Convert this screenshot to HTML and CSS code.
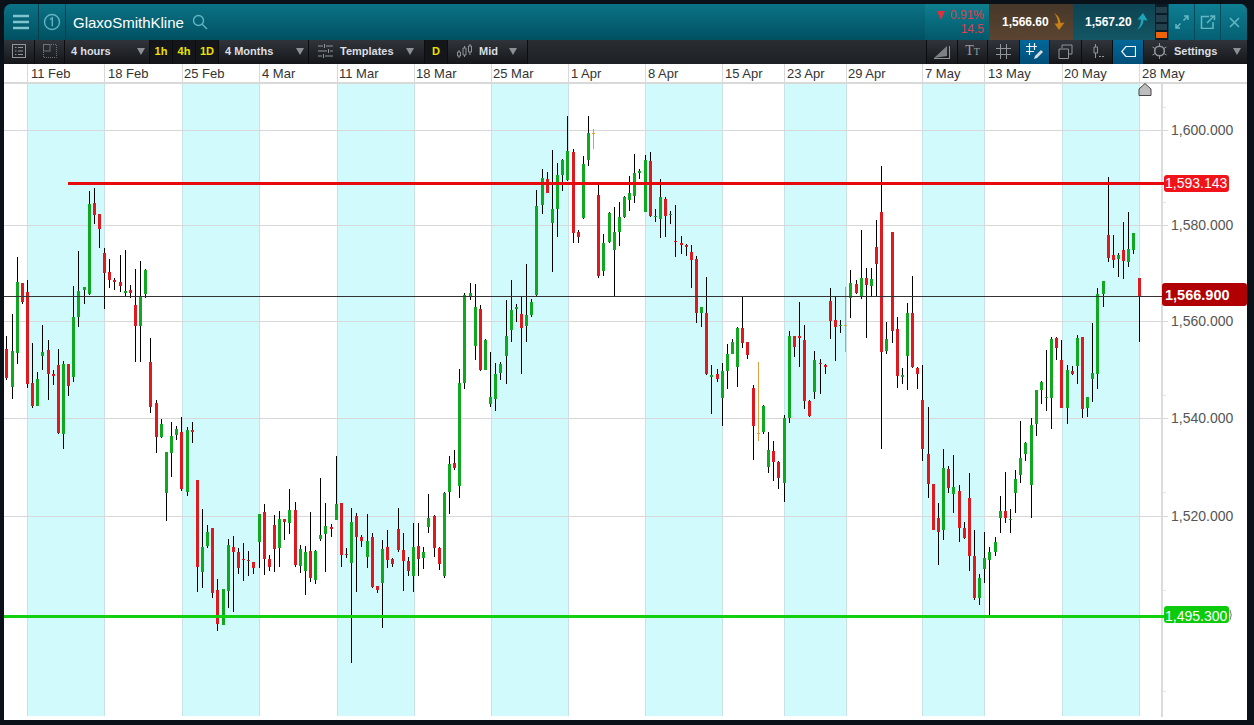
FILE: index.html
```html
<!DOCTYPE html>
<html lang="en">
<head>
<meta charset="utf-8">
<title>GlaxoSmithKline chart</title>
<link rel="stylesheet" href="styles.css">
</head>
<body>
<main class="window">
  <header class="topbar">
    <button class="top-cell menu-cell" aria-label="Menu">
      <svg width="18" height="16" viewBox="0 0 18 16"><path class="ico-top-thick" d="M1 2H17M1 8H17M1 14H17"/></svg>
    </button>
    <div class="top-cell link-cell">
      <svg width="18" height="18" viewBox="0 0 18 18"><circle class="ico-top" cx="9" cy="9" r="7.5"/><path class="ico-top" d="M7 6.5L9.3 4.8V13.2"/></svg>
    </div>
    <div class="title-cell">
      <span class="title">GlaxoSmithKline</span>
      <svg width="16" height="16" viewBox="0 0 16 16"><circle class="ico-top" cx="6.5" cy="6.5" r="5"/><path class="ico-top" d="M10.2 10.2L15 15"/></svg>
    </div>
    <div class="change">
      <div class="change-row"><span class="down-tri"></span><span>0.91%</span></div>
      <div class="change-row">14.5</div>
    </div>
    <div class="price sell">
      <span>1,566.60</span>
      <svg width="13" height="17" viewBox="0 0 13 17"><path class="arrow-sell" d="M2 0C5 2 8 4 8.500 10L12.500 9.500L7 17L2.500 10.500L6 10.500C6 6 4.500 3 2 0Z"/></svg>
    </div>
    <div class="price buy">
      <span>1,567.20</span>
      <svg width="13" height="17" viewBox="0 0 13 17"><path class="arrow-buy" d="M2 17C5 15 8 13 8.500 7L12.500 7.500L8 0L2.500 6.500L6 6.500C6 11 4.500 14 2 17Z"/></svg>
    </div>
    <div class="meter"><i></i><i></i><i></i><i class="meter-on"></i></div>
    <button class="win-btn" aria-label="Expand">
      <svg width="14" height="14" viewBox="0 0 14 14"><path class="ico-win" d="M8.500 5.500L13 1M9 1H13V5M5.500 8.500L1 13M1 9V13H5"/></svg>
    </button>
    <button class="win-btn" aria-label="Detach">
      <svg width="16" height="14" viewBox="0 0 16 14"><path class="ico-win" d="M9 1.500H1.500V13.500H13V7M7 8L14 1M10 1H14.500V5"/></svg>
    </button>
    <button class="win-btn win-last" aria-label="Close">
      <svg width="11" height="11" viewBox="0 0 11 11"><path class="ico-win" d="M1 1L10 10M10 1L1 10"/></svg>
    </button>
  </header>

  <nav class="toolbar">
    <div class="tool w31">
      <svg width="14" height="14" viewBox="0 0 14 14"><rect class="ico" x="0.5" y="0.5" width="13" height="13"/><path class="ico" d="M3 3.500H4.500M6 3.500H11M3 7H4.500M6 7H11M3 10.500H4.500M6 10.500H11"/></svg>
    </div>
    <div class="tool w30">
      <svg width="14" height="14" viewBox="0 0 14 14"><rect class="ico-dim" x="0.5" y="0.5" width="6.5" height="6.5"/><path class="ico-dots" d="M8 0.500H13.500V13.500H0.500V8"/></svg>
    </div>
    <div class="tool drop w85"><span>4 hours</span><i class="caret caret-near"></i></div>
    <div class="tool key w23">1h</div>
    <div class="tool key w23">4h</div>
    <div class="tool key w23">1D</div>
    <div class="tool drop w90"><span>4 Months</span><i class="caret caret-near"></i></div>
    <div class="tool drop drop-icon w116">
      <svg width="15" height="14" viewBox="0 0 15 14"><path class="ico" d="M0 2H5M8 2H15M6.500 0V4M0 7H9M12 7H15M10.500 5V9M0 12H4M7 12H15M5.500 10V14"/></svg>
      <span>Templates</span><i class="caret"></i>
    </div>
    <div class="tool key w23">D</div>
    <div class="tool drop drop-icon w80">
      <svg width="15" height="14" viewBox="0 0 15 14"><path class="ico" d="M2 6V8M0.500 8H3.500V12H0.500ZM2 12V14M7.500 2V4M6 4H9V11H6ZM7.500 11V13M13 0V2M11.500 2H14.500V8H11.500ZM13 8V11"/></svg>
      <span>Mid</span><i class="caret"></i>
    </div>
    <div class="toolbar-gap"></div>
    <div class="tool w31">
      <svg width="18" height="15" viewBox="0 0 18 15"><path class="ruler" d="M1 14L14 2V12Z"/><path class="ico" d="M1 14.500H17M16.500 2V14.500"/></svg>
    </div>
    <div class="tool w30 tt"><span class="t-big">T</span><span class="t-small">T</span></div>
    <div class="tool w32">
      <svg width="15" height="15" viewBox="0 0 15 15"><path class="ico" d="M4.500 0V15M10.500 0V15M0 4.500H15M0 10.500H15"/></svg>
    </div>
    <div class="tool w30 active">
      <svg width="18" height="16" viewBox="0 0 18 16"><path class="ico-white" d="M3.500 0V12M8.500 0V7M0 3.500H11M0 8.500H8"/><path class="pencil" d="M9 13L8 16L11 15L17 9L15 7Z"/></svg>
    </div>
    <div class="tool w32">
      <svg width="15" height="15" viewBox="0 0 15 15"><path class="ico" d="M4 4V1H14V10H11"/><path class="ico" d="M1 5H10.500V14.500H1Z"/></svg>
    </div>
    <div class="tool w31">
      <svg width="13" height="15" viewBox="0 0 13 15"><path class="ico" d="M4.500 0V3M3 3H6.500V9H3ZM4.500 9V14M8 12.500H10M11 12.500H13"/></svg>
    </div>
    <div class="tool w31 active">
      <svg width="15" height="11" viewBox="0 0 15 11"><path class="ico-white" d="M14.500 0.500H5L0.800 5.500L5 10.500H14.500Z"/></svg>
    </div>
    <div class="tool settings">
      <svg width="15" height="16" viewBox="0 0 15 16"><circle class="ico-gear" cx="7.500" cy="8" r="4.800"/><path class="ico" d="M7.500 0V3M7.500 13V16M0.500 4L3.300 5.600M11.700 10.400L14.500 12M0.500 12L3.300 10.400M11.700 5.600L14.500 4"/></svg>
      <span>Settings</span><i class="caret"></i>
    </div>
  </nav>

  <section class="chart">
    <svg class="plot" width="1243" height="656" viewBox="4 64 1243 656" role="img" aria-label="GlaxoSmithKline 4 hour candlestick chart">
      <g class="bands">
        <rect x="27" y="83" width="77" height="633"/>
        <rect x="182" y="83" width="77" height="633"/>
        <rect x="337" y="83" width="77" height="633"/>
        <rect x="491" y="83" width="77" height="633"/>
        <rect x="645" y="83" width="77" height="633"/>
        <rect x="784" y="83" width="62" height="633"/>
        <rect x="922" y="83" width="62" height="633"/>
        <rect x="1062" y="83" width="77" height="633"/>
      </g>
      <path class="band-edge" d="M104.500 64V716M259.500 64V716M414.500 64V716M568.500 64V716M722.500 64V716M846.500 64V716M984.500 64V716M1139.500 64V716M27.500 64V716M182.500 64V716M337.500 64V716M491.500 64V716M645.500 64V716M784.500 64V716M922.500 64V716M1062.500 64V716"/>
      <rect class="header-bg" x="4" y="64" width="1243" height="18"/>
      <path class="header-ticks" d="M27.500 64V82M104.500 64V82M182.500 64V82M259.500 64V82M337.500 64V82M414.500 64V82M491.500 64V82M568.500 64V82M645.500 64V82M722.500 64V82M784.500 64V82M846.500 64V82M922.500 64V82M984.500 64V82M1062.500 64V82M1139.500 64V82"/>
      <rect class="header-rule" x="4" y="82" width="1243" height="2"/>
      <g class="dates">
        <text x="31" y="78">11 Feb</text><text x="108" y="78">18 Feb</text><text x="184" y="78">25 Feb</text><text x="262" y="78">4 Mar</text>
        <text x="339" y="78">11 Mar</text><text x="416" y="78">18 Mar</text><text x="493" y="78">25 Mar</text><text x="571" y="78">1 Apr</text>
        <text x="648" y="78">8 Apr</text><text x="725" y="78">15 Apr</text><text x="787" y="78">23 Apr</text><text x="848" y="78">29 Apr</text>
        <text x="925" y="78">7 May</text><text x="988" y="78">13 May</text><text x="1064" y="78">20 May</text><text x="1142" y="78">28 May</text>
      </g>
      <path class="grid" d="M4 130.500H1168M4 225.500H1168M4 321.500H1168M4 418.500H1168M4 516.500H1168"/>
      <path class="minor" d="M1163 107.500H1166M1163 202.500H1166M1163 298.500H1166M1163 395.500H1166M1163 492.500H1166M1163 590.500H1166M1163 691.500H1166"/>
      <rect class="axis" x="1161" y="84" width="2" height="633"/>
      <g class="yvals">
        <text x="1171" y="135">1,600.000</text><text x="1171" y="230">1,580.000</text><text x="1171" y="326">1,560.000</text>
        <text x="1171" y="423">1,540.000</text><text x="1171" y="521">1,520.000</text>
      </g>
      <g id="candles"></g>
      <rect class="now-line" x="4" y="296" width="1158" height="1"/>
      <rect class="level-red" x="68" y="182" width="1096" height="3"/>
      <rect class="level-green" x="4" y="615" width="1160" height="3"/>
      <path class="marker" d="M1139 95.500V89L1145 83.500L1151 89V95.500Z"/>
      <rect class="tag-red" x="1164" y="175" width="65" height="17" rx="3"/>
      <text class="tag-text" x="1165" y="188">1,593.143</text>
      <rect class="tag-dark" x="1162" y="283" width="85" height="23" rx="3"/>
      <text class="tag-text-bold" x="1165" y="300">1,566.900</text>
      <rect class="tag-green" x="1164" y="606" width="65" height="17" rx="3"/>
      <path class="tag-tail" d="M1230 610Q1232.500 615 1230 620"/>
      <text class="tag-text" x="1165" y="621">1,495.300</text>
    </svg>
  </section>
</main>
<script src="chart.js"></script>
</body>
</html>
```

FILE: styles.css
```css
* { box-sizing: border-box; }
html, body { margin: 0; height: 100%; }
body {
  background: #0a1119;
  font-family: "Liberation Sans", Arial, sans-serif;
  overflow: hidden;
}
button { border: 0; padding: 0; background: none; font: inherit; color: inherit; }
.window {
  width: 1243px;
  height: 716px;
  margin: 4px 0 0 4px;
  display: flex;
  flex-direction: column;
}

/* top bar */
.topbar {
  height: 36px;
  flex: none;
  display: flex;
  align-items: stretch;
  color: #fff;
  background: linear-gradient(#0b7386, #005061);
  border-radius: 7px 7px 0 0;
  overflow: hidden;
}
.top-cell { display: flex; align-items: center; justify-content: center; border-right: 1px solid #033f4d; }
.menu-cell { width: 35px; }
.link-cell { width: 27px; }
.title-cell { flex: 1; display: flex; align-items: center; gap: 8px; padding-left: 7px; }
.title { font-size: 15px; }
.change {
  width: 64px;
  display: flex;
  flex-direction: column;
  justify-content: center;
  gap: 1px;
  padding-right: 5px;
  color: #d8434c;
  font-size: 12px;
  line-height: 13px;
  background: linear-gradient(#0e7f90, #02586a);
}
.change-row { display: flex; justify-content: flex-end; align-items: center; gap: 5px; }
.down-tri { width: 0; height: 0; border: 4.500px solid transparent; border-top: 9px solid #e0303a; border-bottom: 0; }
.price { display: flex; align-items: center; font-size: 12px; font-weight: 700; gap: 3px; padding-left: 13px; padding-bottom: 1px; }
.sell { width: 84px; background: linear-gradient(#463729, #5b4530); }
.buy { width: 82px; padding-left: 12px; background: linear-gradient(#0d4352, #145664); }
.arrow-sell { fill: #c77f16; }
.arrow-buy { fill: #1aa6b8; }
.meter { width: 13px; display: flex; flex-direction: column; gap: 2px; padding: 3px 1px 2px; background: #0a1d26; }
.meter i { flex: 1; background: #23404c; }
.meter .meter-on { background: #f0620a; flex: 0 0 6px; }
.win-btn { width: 26px; flex: none; display: flex; align-items: center; justify-content: center; border-left: 1px solid #044a5a; background: linear-gradient(#0e7f93, #055f72); }
.win-last { width: 27px; }
.ico-top { fill: none; stroke: #62b4c1; stroke-width: 1.400; }
.ico-top-thick { fill: none; stroke: #7fc4cf; stroke-width: 2.500; }
.ico-win { fill: none; stroke: #66b7c4; stroke-width: 1.500; }

/* toolbar */
.toolbar {
  height: 24px;
  flex: none;
  display: flex;
  align-items: stretch;
  color: #dcdfe2;
  font-size: 11px;
  font-weight: 700;
  background: linear-gradient(#31353b, #141619);
}
.tool { display: flex; align-items: center; justify-content: center; border-right: 1px solid #0c0d0f; flex: none; padding-bottom: 2px; }
.toolbar-gap { flex: 1; border-right: 1px solid #0c0d0f; background: linear-gradient(#2a2e33, #1d2024); }
.w23 { width: 23px; } .w30 { width: 30px; } .w31 { width: 31px; } .w32 { width: 32px; }
.w80 { width: 80px; } .w85 { width: 85px; } .w90 { width: 90px; } .w116 { width: 116px; }
.key { color: #e9e300; background: #14161a; }
.drop { justify-content: flex-start; padding-left: 6px; gap: 7px; }
.drop-icon { padding-left: 9px; gap: 7px; }
.drop .caret { margin-left: auto; margin-right: 10px; }
.drop .caret-near { margin-right: 4px; }
.caret { width: 0; height: 0; border: 4px solid transparent; border-top: 7px solid #8d9196; border-bottom: 0; }
.active { background: linear-gradient(#01689a, #004f78); }
.settings { width: 103px; border-right: 0; gap: 7px; justify-content: flex-start; padding-left: 8px; }
.settings .caret { margin-left: 9px; }
.tt { color: #9a9da1; font-family: "Liberation Serif", serif; font-weight: 400; align-items: baseline; padding-top: 3px; }
.t-big { font-size: 14px; }
.t-small { font-size: 10px; }
.ico { fill: none; stroke: #92969b; stroke-width: 1; }
.ico-dim { fill: none; stroke: #6f7378; stroke-width: 1; }
.ico-dots { fill: none; stroke: #6f7378; stroke-width: 1; stroke-dasharray: 1 1; }
.ico-white { fill: none; stroke: #f2f5f7; stroke-width: 1.200; }
.ico-gear { fill: none; stroke: #92969b; stroke-width: 1.600; }
.pencil { fill: #d9dde0; }
.ruler { fill: #7d8186; }

/* chart */
.chart { flex: 1; background: #fff; }
.plot { display: block; }
.bands rect { fill: #d1fafd; }
.band-edge { fill: none; stroke: #c9e2e6; stroke-width: 1; }
.header-bg { fill: #fff; }
.header-ticks { fill: none; stroke: #d9d9d9; stroke-width: 1; }
.header-rule { fill: #d9d9d9; }
.grid { fill: none; stroke: #d8d8d8; stroke-width: 1; }
.minor { fill: none; stroke: #e6e6e6; stroke-width: 1; }
.axis { fill: #dcdcdc; }
.dates text { font-size: 13px; fill: #333; }
.yvals text { font-size: 14px; fill: #555; }
.now-line { fill: #333; }
.level-red { fill: #e60a0e; }
.level-green { fill: #12d010; }
.marker { fill: #bdbdbd; stroke: #444; stroke-width: 1; }
.tag-red { fill: #f0141a; }
.tag-dark { fill: #b00004; }
.tag-green { fill: #0ccb0c; }
.tag-tail { fill: none; stroke: #777; stroke-width: 1; }
.tag-text { font-size: 14px; fill: #fff; }
.tag-text-bold { font-size: 14.500px; font-weight: 700; fill: #fff; }
.w-line { fill: #000; }
.c-g { fill: #10a820; }
.c-r { fill: #dd1a20; }
.c-o { fill: #e0a030; }
.w-o { fill: #dca040; }
```

FILE: chart.js
```js
// [x, high, bodyTop, bodyBottom, low, colour]
var candles = [
[6,336,349,378,380,'r'],[12,314,351,387,399,'g'],[17,257,282,353,364,'g'],[22,283,283,302,304,'r'],[27,280,292,384,388,'r'],
[32,343,383,406,408,'r'],[37,372,379,406,406,'g'],[42,325,352,356,370,'g'],[48,340,350,374,400,'r'],[53,370,374,376,385,'r'],
[58,349,365,433,434,'r'],[63,361,364,434,449,'g'],[68,364,364,386,396,'r'],[73,286,317,377,382,'g'],[78,251,291,317,327,'g'],
[84,287,287,290,304,'g'],[89,191,204,294,295,'g'],[94,188,203,215,224,'r'],[99,214,214,229,248,'r'],[104,248,253,273,309,'r'],
[109,259,272,280,288,'r'],[114,278,280,282,290,'r'],[120,255,282,286,292,'r'],[125,250,291,293,296,'g'],[130,285,290,293,298,'r'],
[135,269,305,326,362,'r'],[140,261,297,326,362,'g'],[145,269,270,294,298,'g'],[150,338,362,407,413,'r'],[156,400,403,437,453,'r'],
[161,419,424,437,438,'g'],[166,452,452,493,521,'g'],[171,422,436,453,477,'g'],[176,426,429,435,440,'g'],[181,417,432,489,491,'r'],
[187,427,430,492,496,'g'],[192,422,430,432,443,'r'],[197,480,480,567,592,'r'],[202,509,547,572,588,'g'],[207,525,532,546,548,'g'],
[212,528,528,593,598,'r'],[217,579,590,624,631,'r'],[223,589,589,625,625,'g'],[228,539,545,591,608,'g'],[233,536,547,552,612,'r'],
[238,548,552,568,574,'r'],[243,543,559,560,581,'r'],[248,551,560,561,576,'r'],[253,562,562,568,574,'r'],[259,514,514,542,568,'g'],
[264,504,512,559,575,'r'],[269,555,559,567,571,'r'],[274,515,525,549,572,'r'],[279,511,519,548,567,'g'],[284,519,519,522,540,'r'],
[289,489,510,523,534,'g'],[295,502,510,565,567,'r'],[300,545,549,566,573,'g'],[305,546,552,571,595,'g'],[310,512,551,578,582,'r'],
[315,550,551,580,584,'g'],[320,478,535,539,541,'g'],[325,503,526,534,572,'g'],[331,524,527,529,537,'r'],[336,456,504,520,520,'g'],
[341,503,503,555,567,'r'],[346,548,554,555,558,'r'],[351,508,522,563,663,'g'],[356,513,516,537,592,'r'],[361,535,537,541,547,'r'],
[367,514,541,557,568,'g'],[372,533,537,587,588,'r'],[377,586,586,590,593,'r'],[382,540,549,583,628,'g'],[387,530,547,560,568,'r'],
[392,558,559,564,567,'r'],[398,508,529,550,552,'r'],[403,533,550,561,591,'r'],[408,557,561,571,576,'r'],[413,523,547,576,592,'g'],
[418,523,546,559,576,'r'],[423,547,552,558,569,'g'],[428,494,518,527,533,'g'],[434,515,516,548,557,'r'],[439,547,548,564,570,'r'],
[444,492,493,576,578,'g'],[449,456,464,492,514,'g'],[454,450,463,468,470,'r'],[459,369,383,486,498,'g'],[464,293,295,383,389,'g'],
[470,283,293,297,300,'g'],[475,284,307,346,360,'g'],[480,305,309,370,371,'r'],[485,339,340,370,370,'g'],[490,352,397,404,407,'g'],
[495,363,374,399,411,'g'],[500,362,364,373,380,'g'],[506,300,336,356,384,'g'],[511,280,310,330,342,'g'],[516,304,307,309,322,'g'],
[521,297,314,328,374,'r'],[526,264,315,326,342,'g'],[531,299,302,315,317,'g'],[536,190,206,295,297,'g'],[542,169,178,205,214,'g'],
[547,172,179,193,193,'r'],[552,150,209,223,272,'g'],[557,163,175,209,237,'g'],[562,159,160,175,191,'g'],[567,116,151,180,181,'g'],
[573,149,152,233,243,'r'],[578,230,232,237,243,'r'],[583,156,164,218,219,'g'],[588,116,133,160,166,'g'],[593,129,133,134,149,'o'],
[598,185,195,276,278,'r'],[603,234,243,271,276,'g'],[609,212,213,242,243,'g'],[614,207,232,250,297,'g'],[619,202,217,232,246,'g'],
[624,196,197,217,218,'g'],[629,176,193,200,211,'g'],[634,154,173,196,203,'g'],[639,169,171,173,179,'g'],[645,155,160,212,212,'g'],
[650,152,161,216,217,'r'],[655,209,216,217,222,'g'],[660,179,197,219,238,'g'],[665,197,199,216,237,'r'],[670,211,214,215,224,'g'],
[675,205,241,242,257,'r'],[681,236,243,245,254,'r'],[686,244,245,247,256,'r'],[691,245,252,260,288,'r'],[696,256,259,313,323,'r'],
[701,307,307,313,327,'g'],[706,277,313,374,375,'r'],[711,365,375,377,414,'g'],[717,369,374,379,382,'r'],[722,363,371,398,426,'g'],
[727,344,354,371,389,'g'],[732,339,342,354,354,'g'],[737,327,328,367,387,'g'],[742,297,328,343,348,'r'],[747,342,342,355,359,'r'],
[753,385,388,426,460,'r'],[758,362,433,434,441,'o'],[763,405,406,432,434,'g'],[768,432,450,467,473,'g'],[773,441,451,462,481,'r'],
[778,461,462,478,489,'r'],[784,415,418,483,502,'g'],[789,331,336,418,423,'g'],[794,336,336,347,357,'r'],[799,302,336,338,367,'r'],
[804,325,340,401,409,'r'],[809,400,401,416,417,'r'],[814,351,360,392,399,'g'],[820,359,363,364,394,'r'],[825,364,365,367,374,'r'],
[830,288,301,321,339,'r'],[835,297,320,327,361,'r'],[840,320,325,326,333,'g'],[845,287,325,326,352,'o'],[850,270,283,298,318,'g'],
[856,280,284,293,294,'r'],[861,230,278,297,299,'g'],[866,268,278,285,338,'r'],[871,268,279,286,296,'g'],[876,220,247,264,297,'r'],
[881,166,212,352,449,'r'],[886,322,339,351,354,'g'],[892,232,232,331,343,'r'],[897,317,329,376,388,'r'],[902,368,375,377,384,'g'],
[907,303,313,356,390,'g'],[912,276,313,367,368,'r'],[917,367,368,374,389,'r'],[922,365,400,449,461,'r'],[928,407,454,484,498,'r'],
[933,484,484,530,530,'r'],[938,503,518,532,565,'r'],[943,449,468,530,540,'g'],[948,466,469,488,493,'r'],[953,455,487,494,513,'g'],
[959,485,491,528,542,'r'],[964,522,528,538,539,'r'],[969,473,498,556,571,'r'],[974,530,556,598,600,'r'],[979,574,578,598,605,'g'],
[984,532,558,569,583,'g'],[989,547,552,560,615,'g'],[995,537,542,552,556,'g'],[1000,496,511,518,533,'g'],[1005,472,511,518,523,'r'],
[1010,509,519,520,533,'g'],[1015,470,479,493,513,'g'],[1020,421,458,475,483,'g'],[1025,442,443,454,461,'g'],[1031,418,425,485,518,'g'],
[1036,390,390,424,436,'g'],[1041,381,382,390,404,'g'],[1046,350,397,398,411,'g'],[1051,337,339,398,429,'g'],[1056,337,338,348,360,'r'],
[1061,340,360,408,408,'r'],[1067,365,370,408,424,'g'],[1072,366,371,374,375,'r'],[1077,335,338,366,384,'g'],[1082,337,337,409,418,'r'],
[1087,397,397,408,417,'g'],[1092,323,373,379,402,'g'],[1097,288,294,374,389,'g'],[1103,281,281,294,307,'g'],[1108,177,235,258,262,'r'],
[1113,235,255,260,268,'r'],[1118,253,255,259,277,'g'],[1123,222,250,261,279,'r'],[1128,212,249,262,267,'g'],[1133,233,233,250,254,'g'],
[1139,278,278,296,342,'r']
];

var NS = 'http://www.w3.org/2000/svg';
var group = document.getElementById('candles');

function bar(x, y, w, h, cls) {
  var r = document.createElementNS(NS, 'rect');
  r.setAttribute('x', x);
  r.setAttribute('y', y);
  r.setAttribute('width', w);
  r.setAttribute('height', h);
  r.setAttribute('class', cls);
  group.appendChild(r);
}

candles.forEach(function (c) {
  var x = c[0], colour = c[5];
  bar(x, c[1], 1, c[4] - c[1], colour === 'o' ? 'w-o' : 'w-line');
  bar(x - 1, c[2], 3, Math.max(1, c[3] - c[2]), 'c-' + colour);
});
```
